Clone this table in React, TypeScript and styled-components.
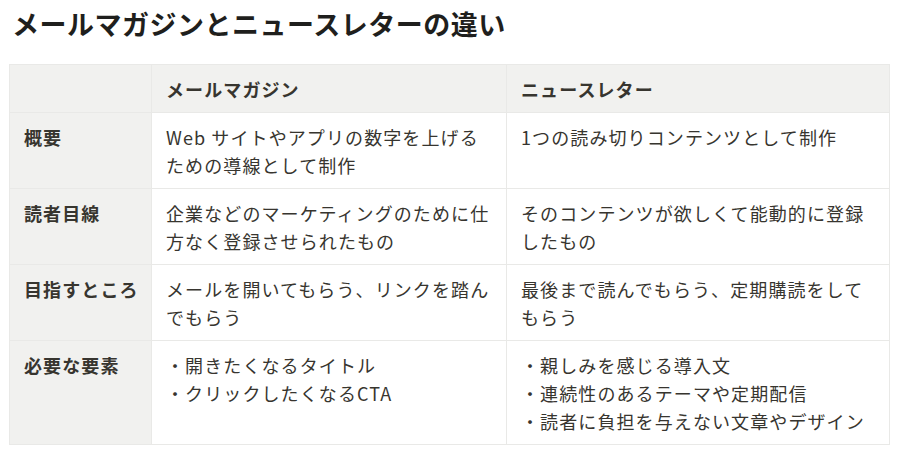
import styled, { createGlobalStyle } from "styled-components";

const GlobalStyle = createGlobalStyle`
  body {
    margin: 0;
    background: #ffffff;
    font-family: "Noto Sans CJK JP", "Noto Sans", sans-serif;
    color: #37352f;
  }
`;

const Page = styled.div`
  padding: 5px 11px 0 9px;
`;

const Title = styled.h1`
  margin: 0 0 21px 3px;
  font-size: 27px;
  line-height: 38px;
  font-weight: 700;
  color: #1f1f1d;
  letter-spacing: 0.5px;
`;

const Table = styled.table`
  width: 880px;
  border-collapse: collapse;
  table-layout: fixed;
  font-size: 18px;
  line-height: 28px;
  letter-spacing: 1.1px;
`;

const Cell = styled.td<{ $muted?: boolean; $bold?: boolean }>`
  border: 1px solid #e9e9e7;
  padding: 10px 14px 9px;
  vertical-align: top;
  background: ${(p) => (p.$muted ? "#f1f1ef" : "#ffffff")};
  font-weight: ${(p) => (p.$bold ? 700 : 400)};
  text-align: left;
  color: #37352f;
`;

const HeadRow = styled.tr`
  height: 48px;
`;

const Line = styled.div`
  white-space: nowrap;
  height: 28px;
`;

type Row = { label: string; mail: string[]; news: string[] };

const rows: Row[] = [
  {
    label: "概要",
    mail: ["Web サイトやアプリの数字を上げる", "ための導線として制作"],
    news: ["1つの読み切りコンテンツとして制作"],
  },
  {
    label: "読者目線",
    mail: ["企業などのマーケティングのために仕", "方なく登録させられたもの"],
    news: ["そのコンテンツが欲しくて能動的に登録", "したもの"],
  },
  {
    label: "目指すところ",
    mail: ["メールを開いてもらう、リンクを踏ん", "でもらう"],
    news: ["最後まで読んでもらう、定期購読をして", "もらう"],
  },
  {
    label: "必要な要素",
    mail: ["・開きたくなるタイトル", "・クリックしたくなるCTA"],
    news: ["・親しみを感じる導入文", "・連続性のあるテーマや定期配信", "・読者に負担を与えない文章やデザイン"],
  },
];

const App = () => {
  return (
    <Page>
      <GlobalStyle />
      <Title>メールマガジンとニュースレターの違い</Title>
      <Table>
        <colgroup>
          <col style={{ width: 142 }} />
          <col style={{ width: 355 }} />
          <col style={{ width: 383 }} />
        </colgroup>
        <thead>
          <HeadRow>
            <Cell as="th" $muted />
            <Cell as="th" $muted $bold>
              <Line>メールマガジン</Line>
            </Cell>
            <Cell as="th" $muted $bold>
              <Line>ニュースレター</Line>
            </Cell>
          </HeadRow>
        </thead>
        <tbody>
          {rows.map((row) => (
            <tr key={row.label}>
              <Cell $muted $bold>
                <Line>{row.label}</Line>
              </Cell>
              <Cell>
                {row.mail.map((l) => (
                  <Line key={l}>{l}</Line>
                ))}
              </Cell>
              <Cell>
                {row.news.map((l) => (
                  <Line key={l}>{l}</Line>
                ))}
              </Cell>
            </tr>
          ))}
        </tbody>
      </Table>
    </Page>
  );
};

export default App;
